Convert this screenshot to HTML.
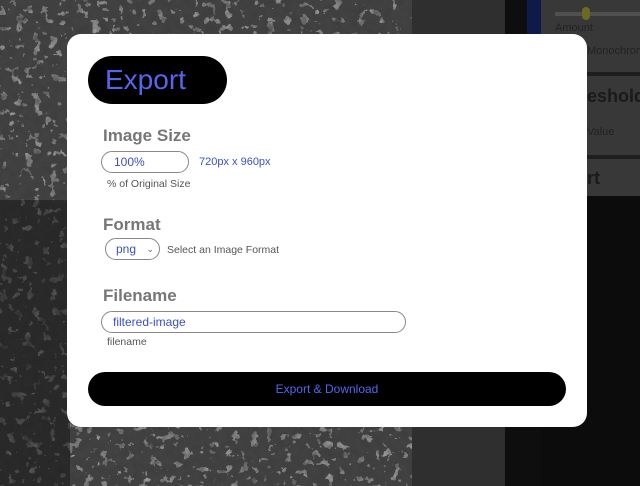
<!DOCTYPE html>
<html><head><style>
body{margin:0;width:640px;height:486px;overflow:hidden;position:relative;font-family:"Liberation Sans",Arial,sans-serif;background:#3c3c3c}
.bg{position:absolute}
.modal{position:absolute;left:67px;top:34px;width:520px;height:393px;background:#fff;border-radius:14px}
.pill{position:absolute;left:21px;top:22px;width:139px;height:48px;background:#000;border-radius:24px;color:#5566ee;font-size:28px;line-height:48px;text-indent:17px}
h3{position:absolute;margin:0;font-size:17px;color:#777;font-weight:bold}
.inp{position:absolute;border:1.5px solid #888;border-radius:12px;box-sizing:border-box;color:#3a4fc8;font-size:12px}
.s{position:absolute;font-size:10.5px;color:#555}
.btn{position:absolute;left:21px;top:338px;width:478px;height:34px;background:#000;border-radius:17px;color:#5566ee;font-size:12px;text-align:center;line-height:34px}
</style></head><body>
<svg class="bg" style="left:0;top:0" width="412" height="486">
<filter id="n"><feTurbulence type="fractalNoise" baseFrequency="0.12" numOctaves="3" seed="5"/><feColorMatrix type="saturate" values="0"/><feComponentTransfer><feFuncR type="discrete" tableValues="0.06 0.06 0.06 0.42 0.42"/><feFuncG type="discrete" tableValues="0.06 0.06 0.06 0.42 0.42"/><feFuncB type="discrete" tableValues="0.06 0.06 0.06 0.42 0.42"/></feComponentTransfer></filter>
<rect width="412" height="486" filter="url(#n)"/>
<rect x="0" y="200" width="70" height="286" fill="#111" opacity="0.5"/>
</svg>
<div class="bg" style="left:412px;top:0;width:93px;height:486px;background:#2f2f2f"></div>
<div class="bg" style="left:505px;top:0;width:36px;height:486px;background:#0e0e0e"></div>
<div class="bg" style="left:527px;top:0;width:14px;height:34px;background:#0e1a4a"></div>
<div class="bg" style="left:541px;top:0;width:99px;height:196px;background:#383838"></div>
<div class="bg" style="left:555px;top:12px;width:85px;height:4px;background:#505050"></div>
<div class="bg" style="left:582px;top:7px;width:8px;height:13px;border-radius:4px;background:#6a6a20"></div>
<div class="bg" style="left:555px;top:22px;color:#222;font-size:11px">Amount</div>
<div class="bg" style="left:587px;top:45px;color:#222;font-size:11px">Monochrom</div>
<div class="bg" style="left:541px;top:72px;width:99px;height:4px;background:#1e1e1e"></div>
<div class="bg" style="left:587px;top:86px;color:#1a1a1a;font-size:18px;font-weight:bold">eshold</div>
<div class="bg" style="left:587px;top:126px;color:#222;font-size:11px">Value</div>
<div class="bg" style="left:541px;top:155px;width:99px;height:4px;background:#1e1e1e"></div>
<div class="bg" style="left:587px;top:168px;color:#1a1a1a;font-size:18px;font-weight:bold">rt</div>
<div class="bg" style="left:541px;top:196px;width:99px;height:290px;background:#0c0c0c"></div>
<div class="modal">
<div class="pill">Export</div>
<h3 style="left:36px;top:92px">Image Size</h3>
<div class="inp" style="left:34px;top:117px;width:88px;height:22px;line-height:20px;padding-left:12px">100%</div>
<div class="s" style="left:132px;top:122px;color:#3a4fc8;font-size:11px">720px x 960px</div>
<div class="s" style="left:40px;top:144px">% of Original Size</div>
<h3 style="left:36px;top:181px">Format</h3>
<div class="inp" style="left:38px;top:204px;width:55px;height:22px;line-height:20px;padding-left:10px">png<span style="position:absolute;right:5px;top:0;font-size:9px;color:#666">&#8964;</span></div>
<div class="s" style="left:100px;top:210px">Select an Image Format</div>
<h3 style="left:36px;top:252px">Filename</h3>
<div class="inp" style="left:34px;top:277px;width:305px;height:22px;line-height:20px;padding-left:11px">filtered-image</div>
<div class="s" style="left:40px;top:302px">filename</div>
<div class="btn">Export &amp; Download</div>
</div>
</body></html>
